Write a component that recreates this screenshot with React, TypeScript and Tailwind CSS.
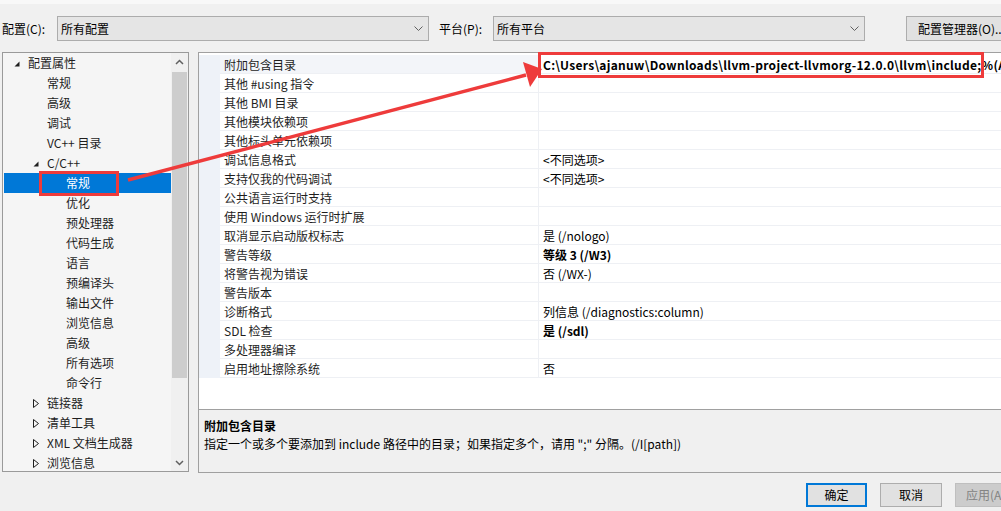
import React from 'react';

const font = { fontFamily: '"Noto Sans CJK SC", "Noto Sans", sans-serif' };

type TreeItem = { label: string; level: number; icon?: 'open' | 'closed'; selected?: boolean };

const treeItems: TreeItem[] = [
    { label: '配置属性', level: 0, icon: 'open' },
    { label: '常规', level: 1 },
    { label: '高级', level: 1 },
    { label: '调试', level: 1 },
    { label: 'VC++ 目录', level: 1 },
    { label: 'C/C++', level: 1, icon: 'open' },
    { label: '常规', level: 2, selected: true },
    { label: '优化', level: 2 },
    { label: '预处理器', level: 2 },
    { label: '代码生成', level: 2 },
    { label: '语言', level: 2 },
    { label: '预编译头', level: 2 },
    { label: '输出文件', level: 2 },
    { label: '浏览信息', level: 2 },
    { label: '高级', level: 2 },
    { label: '所有选项', level: 2 },
    { label: '命令行', level: 2 },
    { label: '链接器', level: 1, icon: 'closed' },
    { label: '清单工具', level: 1, icon: 'closed' },
    { label: 'XML 文档生成器', level: 1, icon: 'closed' },
    { label: '浏览信息', level: 1, icon: 'closed' },
];

const props: { name: string; value?: string; bold?: boolean }[] = [
    { name: '附加包含目录', value: 'C:\\Users\\ajanuw\\Downloads\\llvm-project-llvmorg-12.0.0\\llvm\\include;%(AdditionalIncludeDirectories)', bold: true },
    { name: '其他 #using 指令' },
    { name: '其他 BMI 目录' },
    { name: '其他模块依赖项' },
    { name: '其他标头单元依赖项' },
    { name: '调试信息格式', value: '<不同选项>' },
    { name: '支持仅我的代码调试', value: '<不同选项>' },
    { name: '公共语言运行时支持' },
    { name: '使用 Windows 运行时扩展' },
    { name: '取消显示启动版权标志', value: '是 (/nologo)' },
    { name: '警告等级', value: '等级 3 (/W3)', bold: true },
    { name: '将警告视为错误', value: '否 (/WX-)' },
    { name: '警告版本' },
    { name: '诊断格式', value: '列信息 (/diagnostics:column)' },
    { name: 'SDL 检查', value: '是 (/sdl)', bold: true },
    { name: '多处理器编译' },
    { name: '启用地址擦除系统', value: '否' },
];

const Chevron = () => (
    <svg width="9" height="6" viewBox="0 0 9 6" className="shrink-0">
        <polyline points="0.5,0.5 4.5,4.5 8.5,0.5" fill="none" stroke="#606060" strokeWidth="1" />
    </svg>
);

const Select = ({ text, w }: { text: string; w: string }) => (
    <div className={`${w} shrink-0 h-[25px] bg-[#e5e5e5] border border-[#acacac] flex items-center justify-between pl-[3px] pr-[5px] text-[12px] text-black`}>
        <span>{text}</span>
        <Chevron />
    </div>
);

const TreeIcon = ({ kind }: { kind: 'open' | 'closed' }) =>
    kind === 'open' ? (
        <svg width="6" height="6" viewBox="0 0 6 6">
            <polygon points="5.5,0.5 5.5,5.5 0.5,5.5" fill="#1e1e1e" />
        </svg>
    ) : (
        <svg width="6" height="9" viewBox="0 0 6 9">
            <polygon points="0.5,0.5 5.5,4.5 0.5,8.5" fill="none" stroke="#1e1e1e" strokeWidth="1" />
        </svg>
    );

const App: React.FC = () => {
    return (
        <div className="relative w-[1001px] h-[511px] overflow-hidden bg-[#f0f0f0] text-[12px] text-[#1e1e1e]" style={font}>
            <div className="h-[4px] bg-[#f8f8f8]" />

            {/* top selectors */}
            <div className="flex items-center h-[25px] mt-[12px] pl-[2px] whitespace-nowrap">
                <span className="w-[55px] shrink-0 text-black">配置(C):</span>
                <Select text="所有配置" w="w-[372px]" />
                <span className="ml-[10px] w-[54px] shrink-0 text-black">平台(P):</span>
                <Select text="所有平台" w="w-[372px]" />
                <div className="ml-[41px] w-[120px] h-[25px] shrink-0 bg-[#e1e1e1] border border-[#adadad] flex items-center pl-[11px] text-black">
                    配置管理器(O)...
                </div>
            </div>

            {/* main panels */}
            <div className="flex mt-[11px] ml-[2px]">
                {/* tree */}
                <div className="w-[187px] shrink-0 h-[420px] border border-[#9a9a9a] bg-[#f5f5f5] flex overflow-hidden">
                    <div className="flex-1 pl-[1px] overflow-hidden">
                        {treeItems.map((it, i) => (
                            <div
                                key={i}
                                className={`relative h-[20px] flex items-center whitespace-nowrap ${it.selected ? 'bg-[#0078d7] text-white' : ''}`}
                            >
                                {it.icon && (
                                    <span
                                        className={`absolute flex items-center ${it.level === 0 ? 'left-[10px]' : 'left-[29px]'} ${it.icon === 'open' ? 'top-[8px]' : 'top-[6px]'}`}
                                    >
                                        <TreeIcon kind={it.icon} />
                                    </span>
                                )}
                                <span className={it.level === 0 ? 'ml-[24px]' : it.level === 1 ? 'ml-[43px]' : 'ml-[62px]'}>{it.label}</span>
                            </div>
                        ))}
                    </div>
                    {/* scrollbar */}
                    <div className="w-[17px] shrink-0 bg-[#f0f0f0] flex flex-col">
                        <div className="h-[17px] flex items-center justify-center">
                            <svg width="9" height="6" viewBox="0 0 9 6">
                                <polyline points="1,5 4.5,1.5 8,5" fill="none" stroke="#606060" strokeWidth="1.5" />
                            </svg>
                        </div>
                        <div className="mt-[2px] h-[306px] mx-[1px] bg-[#cdcdcd]" />
                        <div className="flex-1" />
                        <div className="h-[17px] flex items-center justify-center">
                            <svg width="9" height="6" viewBox="0 0 9 6">
                                <polyline points="1,1 4.5,4.5 8,1" fill="none" stroke="#606060" strokeWidth="1.5" />
                            </svg>
                        </div>
                    </div>
                </div>

                {/* property grid */}
                <div className="ml-[9px] w-[820px] shrink-0 h-[421px] border border-[#a0a0a0] flex flex-col overflow-hidden">
                    <div className="h-[357px] shrink-0 bg-white pt-[2px] border-b border-[#a0a0a0]">
                        {props.map((p, i) => (
                            <div key={i} className="flex h-[19px] whitespace-nowrap">
                                <div className="w-[21px] shrink-0 bg-[#eef2f8]" />
                                <div className={`w-[319px] shrink-0 border-b border-r border-[#eef0f4] pl-[4px] pt-[2px] flex items-center ${i === 0 ? 'bg-[#f3f5f9]' : ''}`}>
                                    {p.name}
                                </div>
                                <div className={`flex-1 min-w-0 border-b border-[#eef0f4] pl-[4px] pt-[2px] flex items-center overflow-hidden text-black ${p.bold ? 'font-bold' : ''} ${i === 0 ? 'tracking-[0.3px]' : ''}`}>
                                    {p.value}
                                </div>
                            </div>
                        ))}
                    </div>
                    <div className="flex-1 pl-[5px] pt-[7px] text-black leading-[18px]">
                        <div className="font-bold">附加包含目录</div>
                        <div>指定一个或多个要添加到 include 路径中的目录；如果指定多个，请用 ";" 分隔。(/I[path])</div>
                    </div>
                </div>
            </div>

            {/* bottom buttons */}
            <div className="flex mt-[10px] ml-[806px] gap-[13px] whitespace-nowrap">
                <div className="w-[61px] h-[24px] shrink-0 border-2 border-[#0078d7] bg-[#e1e1e1] flex items-center justify-center text-black">确定</div>
                <div className="w-[62px] h-[24px] shrink-0 border border-[#adadad] bg-[#e1e1e1] flex items-center justify-center text-black">取消</div>
                <div className="w-[62px] h-[24px] shrink-0 border border-[#bfbfbf] bg-[#cccccc] flex items-center pl-[10px] text-[#838383]">应用(A)</div>
            </div>

            {/* red annotations */}
            <div className="absolute left-[39px] top-[171px] w-[80px] h-[25px] border-[3px] border-[#ee3b3b]" />
            <div className="absolute left-[538px] top-[52px] w-[446px] h-[26px] border-[3px] border-[#ee3b3b]" />
            <svg className="absolute left-0 top-0 pointer-events-none" width="1001" height="511" viewBox="0 0 1001 511">
                <line x1="128" y1="180" x2="526" y2="75" stroke="#ee3b3b" strokeWidth="3.5" />
                <polygon points="542,69 523,62 530,87" fill="#ee3b3b" />
            </svg>
        </div>
    );
};

export default App;
